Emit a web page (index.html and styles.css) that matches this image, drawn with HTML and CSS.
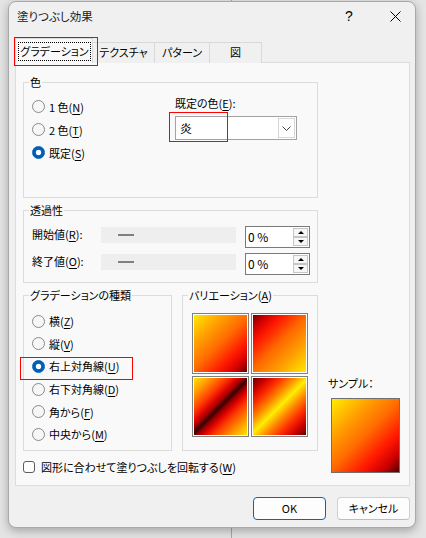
FILE: index.html
```html
<!DOCTYPE html>
<html lang="ja">
<head>
<meta charset="utf-8">
<title>塗りつぶし効果</title>
<link rel="stylesheet" href="styles.css">
</head>
<body>
<div class="dialog">
  <div class="titlebar">
    <span class="title">塗りつぶし効果</span>
    <span class="help">?</span>
    <span class="close"><svg width="11" height="11" viewBox="0 0 11 11"><path d="M0.5 0.5L10.5 10.5M10.5 0.5L0.5 10.5" stroke="#000" stroke-width="1"/></svg></span>
  </div>
  <div class="body">
    <div class="tabs">
      <div class="tab active"><span class="focus">グラデーション</span></div>
      <div class="tab t2">テクスチャ</div>
      <div class="tab t3">パターン</div>
      <div class="tab t4">図</div>
    </div>
    <div class="panel">
      <fieldset class="group color-group">
        <legend>色</legend>
        <div class="color-body">
          <div class="radio-list">
            <div class="radio"><span class="dot"></span>1 色(<u>N</u>)</div>
            <div class="radio"><span class="dot"></span>2 色(<u>T</u>)</div>
            <div class="radio checked"><span class="dot"></span>既定(<u>S</u>)</div>
          </div>
          <div class="preset">
            <div class="preset-label">既定の色(<u>E</u>):</div>
            <div class="combo">
              <span class="combo-value">炎</span>
              <span class="combo-btn"><svg width="9" height="5" viewBox="0 0 9 5"><path d="M0.5 0.5L4.5 4.5L8.5 0.5" fill="none" stroke="#404040"/></svg></span>
            </div>
          </div>
        </div>
      </fieldset>

      <fieldset class="group trans-group">
        <legend>透過性</legend>
        <div class="trans-body">
          <div class="trow">
            <span class="tlabel">開始値(<u>R</u>):</span>
            <span class="track"><span class="dash"></span></span>
            <span class="spin"><span class="spin-val">0 %</span><span class="spin-btns"><span class="sbtn up"></span><span class="sbtn down"></span></span></span>
          </div>
          <div class="trow">
            <span class="tlabel">終了値(<u>O</u>):</span>
            <span class="track"><span class="dash"></span></span>
            <span class="spin"><span class="spin-val">0 %</span><span class="spin-btns"><span class="sbtn up"></span><span class="sbtn down"></span></span></span>
          </div>
        </div>
      </fieldset>

      <div class="bottom">
        <fieldset class="group grad-group">
          <legend>グラデーションの種類</legend>
          <div class="grad-body">
            <div class="radio"><span class="dot"></span>横(<u>Z</u>)</div>
            <div class="radio"><span class="dot"></span>縦(<u>V</u>)</div>
            <div class="radio checked marked"><span class="dot"></span>右上対角線(<u>U</u>)</div>
            <div class="radio"><span class="dot"></span>右下対角線(<u>D</u>)</div>
            <div class="radio"><span class="dot"></span>角から(<u>F</u>)</div>
            <div class="radio"><span class="dot"></span>中央から(<u>M</u>)</div>
          </div>
        </fieldset>
        <fieldset class="group var-group">
          <legend>バリエーション(<u>A</u>)</legend>
          <div class="var-body">
            <span class="swatch s1"></span>
            <span class="swatch s2"></span>
            <span class="swatch s3"></span>
            <span class="swatch s4"></span>
          </div>
        </fieldset>
        <div class="sample">
          <div class="sample-label">サンプル：</div>
          <div class="sample-box"></div>
        </div>
        <div class="check-row">
          <span class="checkbox"></span>図形に合わせて塗りつぶしを回転する(<u>W</u>)
        </div>
      </div>
    </div>
    <div class="actions">
      <span class="btn primary">OK</span>
      <span class="btn">キャンセル</span>
    </div>
  </div>
</div>
</body>
</html>
```
FILE: styles.css
```css
* { box-sizing: border-box; }
html, body { margin: 0; }
body {
  width: 426px;
  height: 538px;
  overflow: hidden;
  padding: 1px 0 0 8px;
  background: linear-gradient(to right, #e4e4e4 0, #e4e4e4 231px, #a8a8a8 231px, #a8a8a8 232px, #e4e4e4 232px);
  font-family: "Noto Sans CJK JP", "Noto Sans", sans-serif;
  font-size: 11px;
  line-height: 16px;
  color: #000;
  font-feature-settings: "palt";
  white-space: nowrap;
}
u { text-decoration-thickness: 1px; text-underline-offset: 2px; }

.dialog {
  width: 408px;
  height: 527px;
  background: #f0f0f0;
  border: 1px solid #a9a9a9;
  border-radius: 8px;
  box-shadow: 0 3px 10px rgba(0,0,0,0.28);
  display: flex;
  flex-direction: column;
}

.titlebar {
  height: 28px;
  display: flex;
  align-items: center;
  padding-left: 8px;
}
.title { flex: 1; color: #1a1a1a; font-size: 11.5px; }
.help {
  width: 20px;
  text-align: center;
  font-family: "Liberation Sans", sans-serif;
  font-size: 14px;
}
.close {
  width: 20px;
  margin-left: 26px;
  margin-right: 10px;
  display: flex;
  justify-content: center;
}

.body { padding: 8px 5px 0 6px; }

.tabs {
  display: flex;
  align-items: flex-end;
  height: 25px;
  margin-bottom: -1px;
}
.tab {
  height: 21px;
  border: 1px solid #d9d9d9;
  border-left: none;
  border-bottom: none;
  background: #f0f0f0;
  text-align: center;
  line-height: 19px;
}
.tab.t2 { width: 62px; }
.tab.t3 { width: 55px; }
.tab.t4 { width: 52px; }
.tab.active {
  width: 78px;
  height: 25px;
  border-left: 1px solid #d9d9d9;
  background: #f9f9f9;
  padding: 3px 1px 0 2px;
  position: relative;
  z-index: 1;
}
.tab.active::after {
  content: "";
  position: absolute;
  left: -2px;
  top: -2px;
  width: 82px;
  height: 27px;
  border: 1px solid #f00;
}
.focus {
  display: block;
  height: 19px;
  border: 1px dotted #000;
  line-height: 17px;
  text-align: center;
}

.panel {
  height: 424px;
  background: #f9f9f9;
  border: 1px solid #dcdcdc;
  padding-left: 7px;
}

.group {
  margin: 0;
  padding: 0;
  min-width: 0;
  border: 1px solid #dcdcdc;
}
.group legend {
  margin-left: 5px;
  padding: 0 1px;
  height: 16px;
  line-height: 16px;
}

.color-group { margin-top: 11px; width: 295px; }
.color-body {
  height: 107px;
  display: flex;
  padding: 5px 0 0 8px;
}
.radio-list { width: 143px; }
.radio {
  display: flex;
  align-items: center;
  height: 23px;
}
.dot {
  flex: none;
  width: 13px;
  height: 13px;
  border-radius: 50%;
  border: 1px solid #8a8a8a;
  background: #f6f6f6;
  margin-right: 4px;
}
.radio.checked .dot {
  border-color: #005fb8;
  background: radial-gradient(circle, #fff 0, #fff 2.4px, #005fb8 3.1px);
}
.preset-label { height: 16px; }
.combo {
  margin-top: 5px;
  width: 122px;
  height: 24px;
  border: 1px solid #a2a2a2;
  background: #fff;
  display: flex;
  position: relative;
}
.combo::after {
  content: "";
  position: absolute;
  left: -7px;
  top: -5px;
  width: 57px;
  height: 28px;
  border: 1px solid #f00;
}
.combo-value { flex: 1; padding-left: 4px; line-height: 22px; font-size: 12px; }
.combo-btn {
  width: 17px;
  margin: 1px 1px 1px 0;
  border: 1px solid #d6d6d6;
  display: flex;
  align-items: center;
  justify-content: center;
}

.trans-group { margin-top: 4px; width: 295px; }
.trans-body { padding: 8px 0 7px 8px; }
.trow { display: flex; height: 22px; }
.trow + .trow { margin-top: 5px; }
.tlabel { width: 69px; }
.track {
  width: 135px;
  height: 16px;
  margin-top: 1px;
  background: #eeeeee;
  display: flex;
  align-items: center;
  padding-left: 17px;
}
.dash { width: 16px; height: 2px; background: #808080; }
.spin {
  margin-left: 9px;
  width: 65px;
  height: 22px;
  border: 1px solid #7a7a7a;
  background: #fff;
  display: flex;
}
.spin-val { flex: 1; padding-left: 2px; line-height: 20px; font-size: 12px; }
.spin-btns {
  width: 16px;
  padding: 1px 1px 1px 0;
  display: flex;
  flex-direction: column;
}
.sbtn {
  flex: 1;
  border: 1px solid #c6c6c6;
  background: #f7f7f7;
  display: flex;
  align-items: center;
  justify-content: center;
}
.sbtn.up::before {
  content: "";
  border-left: 3px solid transparent;
  border-right: 3px solid transparent;
  border-bottom: 3px solid #000;
}
.sbtn.down::before {
  content: "";
  border-left: 3px solid transparent;
  border-right: 3px solid transparent;
  border-top: 3px solid #000;
}

.bottom {
  margin-top: 4px;
  display: grid;
  grid-template-columns: 149px 136px auto;
  grid-template-rows: auto auto;
  column-gap: 10px;
}
.grad-group { grid-column: 1; grid-row: 1; }
.grad-body { height: 147px; padding: 7px 0 0 8px; }
.grad-body .radio { height: 22.6px; }
.radio.marked { position: relative; }
.radio.marked::after {
  content: "";
  position: absolute;
  left: -12px;
  top: 2px;
  width: 111px;
  height: 21px;
  border: 1px solid #f00;
}
.var-group { grid-column: 2; grid-row: 1; }
.var-body {
  height: 147px;
  padding: 10px 0 0 9px;
  display: grid;
  grid-template-columns: 57px 57px;
  grid-template-rows: 61px 61px;
  gap: 2px;
  align-content: start;
}
.swatch {
  border: 1px solid #7f7f7f;
  box-shadow: inset 0 0 0 1px #fff;
}
.s1 { background: linear-gradient(135deg, #ffee00 0%, #ffa000 28%, #ff6a00 50%, #ff1800 72%, #d00000 86%, #560000 100%); }
.s2 { background: linear-gradient(315deg, #ffee00 0%, #ffa000 28%, #ff6a00 50%, #ff1800 72%, #d00000 86%, #560000 100%); }
.s3 { background: linear-gradient(135deg, #ffee00 0%, #ff9a00 16%, #ff4000 30%, #e00000 40%, #8a0000 46%, #3a0000 50%, #8a0000 54%, #e00000 60%, #ff4000 70%, #ff9a00 84%, #ffee00 100%); }
.s4 { background: linear-gradient(135deg, #560000 0%, #d00000 14%, #ff3000 26%, #ff8a00 38%, #ffee00 50%, #ff8a00 62%, #ff3000 74%, #d00000 86%, #560000 100%); }

.sample { grid-column: 3; grid-row: 1 / span 2; padding-top: 88px; }
.sample-label { height: 16px; }
.sample-box {
  margin: 7px 0 0 3px;
  width: 69px;
  height: 75px;
  border: 1px solid #707070;
  background: linear-gradient(135deg, #ffee00 0%, #ffa000 28%, #ff6a00 50%, #ff1800 72%, #d00000 86%, #560000 100%);
}

.check-row {
  grid-column: 1 / span 2;
  grid-row: 2;
  margin-top: 8px;
  height: 16px;
  display: flex;
  align-items: center;
}
.checkbox {
  flex: none;
  width: 12px;
  height: 12px;
  border: 1px solid #5d5d5d;
  border-radius: 3px;
  background: #fdfdfd;
  margin-right: 6px;
}

.actions {
  margin-top: 11px;
  display: flex;
  justify-content: flex-end;
  gap: 11px;
}
.btn {
  width: 73px;
  height: 23px;
  border: 1px solid #d0d0d0;
  border-bottom-color: #bdbdbd;
  border-radius: 4px;
  background: #fdfdfd;
  text-align: center;
  line-height: 21px;
}
.btn.primary { border-color: #0067c0; }
```
